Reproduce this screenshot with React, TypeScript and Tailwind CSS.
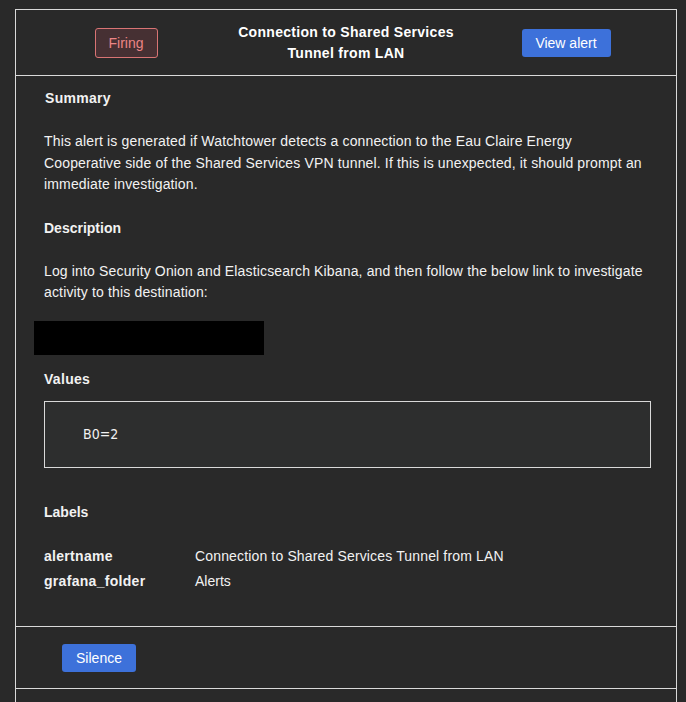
import React from "react";

const font = { fontFamily: '"Liberation Sans", Arial, sans-serif' };

export default function App() {
  return (
    <div className="min-h-[702px] w-[686px] bg-[#292929] pt-[9px] text-[#f2f2f2] overflow-hidden" style={font}>
      <div className="ml-[15px] w-[662px] border border-b-0 border-[#d9d9d9]">
        {/* Header */}
        <div className="grid h-[66px] grid-cols-3 items-center border-b border-[#d9d9d9]">
          <div className="flex justify-center">
            <span className="flex h-[30px] w-[63px] items-center justify-center rounded-[3px] border border-[#d97474] bg-[#463033] pt-px text-[14px] text-[#ec8585]">
              Firing
            </span>
          </div>
          <div className="flex justify-center text-center text-[14px] font-bold leading-[21px] tracking-[0.3px] text-white">
            <span>
              Connection to Shared Services
              <br />
              Tunnel from LAN
            </span>
          </div>
          <div className="flex justify-center">
            <span className="flex h-[28px] w-[89px] items-center justify-center rounded-[3px] bg-[#3d71da] pt-px text-[14px] text-white">
              View alert
            </span>
          </div>
        </div>

        {/* Body */}
        <div className="border-b border-[#d9d9d9] pl-[28px] pr-[20px] pt-[12px] pb-[35px]">
          <div className="pl-px text-[14px] font-bold leading-[20px] tracking-[0.3px]">Summary</div>
          <p className="mt-[23px] whitespace-nowrap text-[14px] leading-[21.5px] tracking-[0.15px]">
            This alert is generated if Watchtower detects a connection to the Eau Claire Energy
            <br />
            Cooperative side of the Shared Services VPN tunnel. If this is unexpected, it should prompt an
            <br />
            immediate investigation.
          </p>
          <div className="mt-[22px] text-[14px] font-bold leading-[20px]">Description</div>
          <p className="mt-[23px] whitespace-nowrap text-[14px] leading-[21.5px] tracking-[0.15px]">
            Log into Security Onion and Elasticsearch Kibana, and then follow the below link to investigate
            <br />
            activity to this destination:
          </p>
          <div className="-ml-[10px] mt-[17px] h-[34px] w-[230px] bg-black" />
          <div className="mt-[14px] text-[14px] font-bold leading-[20px] tracking-[0.3px]">Values</div>
          <div className="mt-[12px] flex h-[67px] w-[607px] items-center border border-[#d9d9d9] bg-[#2d2e2e] pl-[38px]">
            <span
              className="text-[14px] text-[#f2f2f2]"
              style={{ fontFamily: '"DejaVu Sans", sans-serif', fontStretch: "condensed" }}
            >
              B0=2
            </span>
          </div>
          <div className="mt-[34px] text-[14px] font-bold leading-[20px]">Labels</div>
          <div className="mt-[24px] flex flex-col gap-[5px] text-[14px] leading-[20px]">
            <div className="flex">
              <span className="w-[151px] font-bold tracking-[0.3px]">alertname</span>
              <span className="tracking-[0.15px]">Connection to Shared Services Tunnel from LAN</span>
            </div>
            <div className="flex">
              <span className="w-[151px] font-bold tracking-[0.3px]">grafana_folder</span>
              <span>Alerts</span>
            </div>
          </div>
        </div>

        {/* Footer */}
        <div className="border-b border-[#d9d9d9] pl-[46px] pt-[17px] pb-[16px]">
          <span className="flex h-[28px] w-[74px] items-center justify-center rounded-[3px] bg-[#3d71da] pt-px text-[14px] text-white">
            Silence
          </span>
        </div>
        <div className="h-[20px]" />
      </div>
    </div>
  );
}
